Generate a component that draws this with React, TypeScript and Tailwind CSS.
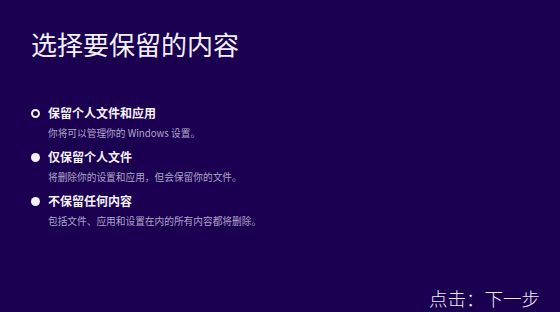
export default function App() {
  const options = [
    { title: '保留个人文件和应用', desc: '你将可以管理你的 Windows 设置。', selected: true },
    { title: '仅保留个人文件', desc: '将删除你的设置和应用，但会保留你的文件。', selected: false },
    { title: '不保留任何内容', desc: '包括文件、应用和设置在内的所有内容都将删除。', selected: false },
  ]

  return (
    <div
      className="w-[560px] h-[312px] bg-[#1b0052] flex flex-col overflow-hidden"
      style={{ fontFamily: '"Noto Sans CJK SC", "Noto Sans", sans-serif' }}
    >
      <h1 className="pl-[31px] pt-[27px] text-[26px] leading-[34px] text-[#f2f0f7] font-normal">
        选择要保留的内容
      </h1>

      <div className="mt-[43px] pl-[31px] flex flex-col gap-[8px]">
        {options.map((opt) => (
          <div key={opt.title} className="flex flex-col gap-[4px]">
            <div className="flex items-center gap-[8px] h-[18px]">
              {opt.selected ? (
                <span className="w-[9px] h-[9px] rounded-full border-[2px] border-[#f4f2f8] bg-[#1b0052]" />
              ) : (
                <span className="w-[9px] h-[9px] rounded-full bg-[#f4f2f8]" />
              )}
              <span className="text-[12px] leading-[18px] font-semibold text-[#f4f2f8]">{opt.title}</span>
            </div>
            <p className="pl-[17px] text-[9.7px] leading-[14px] text-[#aea6c9]">{opt.desc}</p>
          </div>
        ))}
      </div>

      <div className="mt-auto pb-[2px] pr-[20px] flex justify-end">
        <span className="text-[18.5px] leading-[24px] text-[#eeeaf4] font-light">点击：下一步</span>
      </div>
    </div>
  )
}
